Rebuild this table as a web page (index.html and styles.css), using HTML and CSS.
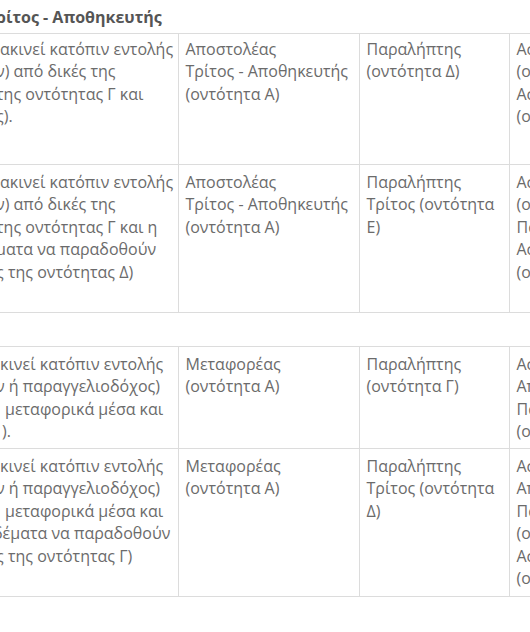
FILE: index.html
```html
<!DOCTYPE html>
<html lang="el">
<head>
<meta charset="utf-8">
<title>Πίνακας</title>
<link rel="stylesheet" href="styles.css">
</head>
<body>
<div class="clip">
<table class="grid">
  <colgroup>
    <col class="c1"><col class="c2"><col class="c3"><col class="c4">
  </colgroup>
  <tr class="head">
    <th colspan="4"><span class="ln">ρίτος - Αποθηκευτής</span></th>
  </tr>
  <tr class="row r1">
    <td>
      <span class="ln in">ακινεί κατόπιν εντολής</span>
      <span class="ln">ν) από δικές της</span>
      <span class="ln">της οντότητας Γ και</span>
      <span class="ln">ς).</span>
    </td>
    <td>Αποστολέας<br>Τρίτος - Αποθηκευτής<br>(οντότητα Α)</td>
    <td>Παραλήπτης<br>(οντότητα Δ)</td>
    <td>
      <span class="ln">Ασφάλεια</span>
      <span class="ln">(οντότητα Γ)</span>
      <span class="ln">Ασφάλεια</span>
      <span class="ln">(οντότητα Δ)</span>
    </td>
  </tr>
  <tr class="row r2">
    <td>
      <span class="ln in">ακινεί κατόπιν εντολής</span>
      <span class="ln">ν) από δικές της</span>
      <span class="ln">της οντότητας Γ και η</span>
      <span class="ln">ματα να παραδοθούν</span>
      <span class="ln">ς της οντότητας Δ)</span>
    </td>
    <td>Αποστολέας<br>Τρίτος - Αποθηκευτής<br>(οντότητα Α)</td>
    <td>Παραλήπτης<br>Τρίτος (οντότητα<br>Ε)</td>
    <td>
      <span class="ln">Ασφάλεια</span>
      <span class="ln">(οντότητα Γ)</span>
      <span class="ln">Παραλήπτης</span>
      <span class="ln">Ασφάλεια</span>
      <span class="ln">(οντότητα Ε)</span>
    </td>
  </tr>
  <tr class="head gap">
    <th colspan="4"></th>
  </tr>
  <tr class="row r3">
    <td>
      <span class="ln in">κινεί κατόπιν εντολής</span>
      <span class="ln">ν ή παραγγελιοδόχος)</span>
      <span class="ln in-wide">μεταφορικά μέσα και</span>
      <span class="ln in-mid">).</span>
    </td>
    <td>Μεταφορέας<br>(οντότητα Α)</td>
    <td>Παραλήπτης<br>(οντότητα Γ)</td>
    <td>
      <span class="ln">Ασφάλεια</span>
      <span class="ln">Αποστολέας</span>
      <span class="ln">Παραλήπτης</span>
      <span class="ln">(οντότητα Γ)</span>
    </td>
  </tr>
  <tr class="row r4">
    <td>
      <span class="ln in">κινεί κατόπιν εντολής</span>
      <span class="ln">ν ή παραγγελιοδόχος)</span>
      <span class="ln in-wide">μεταφορικά μέσα και</span>
      <span class="ln out">δέματα να παραδοθούν</span>
      <span class="ln">ς της οντότητας Γ)</span>
    </td>
    <td>Μεταφορέας<br>(οντότητα Α)</td>
    <td>Παραλήπτης<br>Τρίτος (οντότητα<br>Δ)</td>
    <td>
      <span class="ln">Ασφάλεια</span>
      <span class="ln">Αποστολέας</span>
      <span class="ln">Παραλήπτης</span>
      <span class="ln">(οντότητα Γ)</span>
      <span class="ln">Ασφάλεια</span>
      <span class="ln">(οντότητα Δ)</span>
    </td>
  </tr>
</table>
</div>
</body>
</html>
```

FILE: styles.css
```css
html, body {
  margin: 0;
  padding: 0;
  background: #ffffff;
}

.clip {
  width: 530px;
  height: 632px;
  overflow: hidden;
}

.grid {
  margin-left: -4px;
  border-collapse: collapse;
  table-layout: fixed;
  width: 713px;
  font-family: "Open Sans", "Noto Sans", sans-serif;
  font-size: 16px;
  line-height: 22.5px;
  color: #6b6b6b;
}

.c1 { width: 182px; }
.c2 { width: 181px; }
.c3 { width: 150px; }
.c4 { width: 200px; }

.grid td {
  vertical-align: top;
  border: 1px solid #dcdcdc;
  padding: 6px 7px 5px 7px;
  white-space: nowrap;
  overflow: hidden;
}

.grid td:first-child {
  padding-left: 0;
  border-left: none;
}

.head th {
  text-align: left;
  font-weight: 700;
  color: #555555;
  padding: 6px 0 0 0;
  border: none;
  border-bottom: 1px solid #dcdcdc;
  white-space: nowrap;
  vertical-align: top;
}

.head { height: 33px; }
.head.gap { height: 34px; }
.head.gap th { border-top: 1px solid #dcdcdc; }

.r1 { height: 131px; }
.r1 td { padding-top: 4px; }
.r2 { height: 148px; }
.r3 { height: 102px; }
.r4 { height: 148px; }

.ln {
  display: block;
  white-space: nowrap;
}

.in { padding-left: 4px; }
.in-wide { padding-left: 9px; }
.in-mid { padding-left: 6px; }
.out { margin-left: -3px; }
```
